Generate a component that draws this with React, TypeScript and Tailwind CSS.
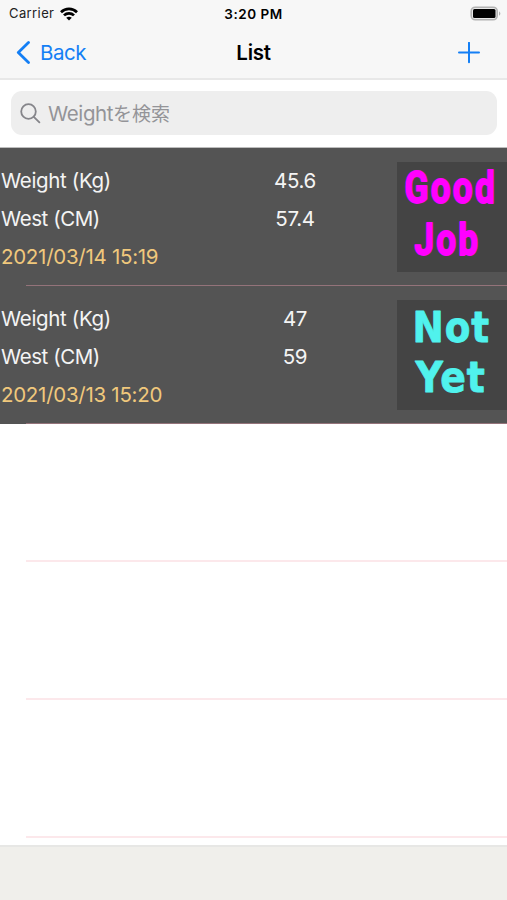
type Line = { text: string; x: number; y: number; scale: number; spacing: number };
type Entry = { weight: string; waist: string; date: string; color: string; font: string; size: number; stroke: number; lines: Line[] };

const entries: Entry[] = [
  {
    weight: '45.6', waist: '57.4', date: '2021/03/14 15:19', color: '#ff00ff', font: 'Roboto, sans-serif', size: 44, stroke: 1.8,
    lines: [
      { text: 'Good', x: 7.5, y: 41, scale: 0.8, spacing: 2.8 },
      { text: 'Job', x: 17.5, y: 93, scale: 0.8, spacing: 2.6 },
    ],
  },
  {
    weight: '47', waist: '59', date: '2021/03/13 15:20', color: '#50f2ed', font: '"DejaVu Sans", sans-serif', size: 43, stroke: 0.8,
    lines: [
      { text: 'Not', x: 15.5, y: 42, scale: 0.87, spacing: 1 },
      { text: 'Yet', x: 18.5, y: 92, scale: 0.88, spacing: 1 },
    ],
  },
];

function Badge({ entry }: { entry: Entry }) {
  return (
    <svg className="mt-[14px] h-[110px] w-[110px] shrink-0 bg-[#444444]" viewBox="0 0 110 110">
      {entry.lines.map((l) => (
        <text key={l.text} transform={`translate(${l.x} ${l.y}) scale(${l.scale} 1)`} letterSpacing={l.spacing} fontFamily={entry.font} fontWeight="700" fontSize={entry.size} fill={entry.color} stroke={entry.color} strokeWidth={entry.stroke} strokeLinejoin="round">
          {l.text}
        </text>
      ))}
    </svg>
  );
}

function Row({ entry }: { entry: Entry }) {
  return (
    <div className="relative flex h-[138px] bg-[#545454] text-[20.5px] leading-[38px] text-[#f4f4f4]">
      <div className="w-[222px] shrink-0 pt-[14px] pl-[1px]">
        <div className="tracking-[-0.35px]">Weight (Kg)</div>
        <div className="tracking-[-0.45px]">West (CM)</div>
        <div className="tracking-[-0.28px] text-[#f0c87c]">{entry.date}</div>
      </div>
      <div className="w-[146px] shrink-0 pt-[14px] text-center tracking-[-0.3px]">
        <div>{entry.weight}</div>
        <div>{entry.waist}</div>
      </div>
      <div className="w-[29px] shrink-0" />
      <Badge entry={entry} />
      <div className="absolute right-0 bottom-0 left-[26px] h-px bg-[#94737a]" />
    </div>
  );
}

export default function App() {
  return (
    <div className="flex h-[900px] w-[507px] flex-col overflow-hidden bg-white font-['Inter','Noto_Sans_CJK_JP',sans-serif]">
      <header className="h-[80px] shrink-0 border-b-2 border-[#e8e8e8] bg-[#f7f7f7]">
        <div className="grid h-[27px] grid-cols-3 items-center text-black">
          <div className="flex items-center gap-[6px] pl-[9px] text-[13px] tracking-[0.4px] text-[#222]">
            <span className="pt-px">Carrier</span>
            <svg className="h-[14px] w-[18px]" viewBox="0 0 18 14" fill="none" stroke="#000" strokeWidth="2.7">
              <path d="M1 5.2C5.5 .8 12.5 .8 17 5.2" />
              <path d="M4 8.4C6.8 5.6 11.2 5.6 14 8.4" />
              <path d="M6.2 10.8Q9 8.6 11.8 10.8L9 13.6Z" fill="#000" stroke="none" />
            </svg>
          </div>
          <div className="pt-px text-center text-[13.5px] font-semibold tracking-[0.5px]">3:20 PM</div>
          <svg className="mr-[5px] h-[15px] w-[32px] justify-self-end" viewBox="0 0 32 15">
            <rect x="1.2" y="1.2" width="26" height="12.6" rx="4" fill="#e8e8e8" stroke="#b2b2b2" strokeWidth="1.6" />
            <rect x="3" y="3" width="22.5" height="9" rx="1.5" fill="#000" />
            <path d="M29 5.2Q31.8 7.5 29 9.8Z" fill="#b2b2b2" />
          </svg>
        </div>
        <div className="grid h-[51px] grid-cols-3 items-center">
          <div className="flex items-center pl-[16px] text-[20.5px] text-[#147ff5]">
            <svg className="mr-[9px] h-[24px] w-[15px]" viewBox="0 0 15 24" fill="none" stroke="currentColor" strokeWidth="2.8" strokeLinecap="round" strokeLinejoin="round">
              <path d="M12.5 1.5L2.3 11.5L12.5 21.5" />
            </svg>
            <span className="pt-px tracking-[-0.5px]">Back</span>
          </div>
          <div className="pt-px text-center text-[20.5px] font-semibold tracking-[-0.3px] text-black">List</div>
          <svg className="mr-[27px] h-[22px] w-[22px] justify-self-end" viewBox="0 0 22 22" stroke="#147ff5" strokeWidth="2" strokeLinecap="round">
            <path d="M11 0.8V20.2M1 10.5H21" />
          </svg>
        </div>
      </header>

      <div className="h-[68px] shrink-0 border-b border-[#bdbdbd] px-[11px] pt-[11px]">
        <div className="flex h-[44px] w-[486px] items-center rounded-[11px] bg-[#eeeeee] pl-[9px] text-[#949498]">
          <svg className="mr-[7px] h-[21px] w-[21px]" viewBox="0 0 21 21" fill="none" stroke="#85858a" strokeWidth="1.8" strokeLinecap="round">
            <circle cx="8.5" cy="8.5" r="7.3" />
            <path d="M13.8 13.8L19.4 19.4" />
          </svg>
          <span className="pt-[2px] text-[20.5px] leading-[28px] tracking-[-0.4px]">Weight<span className="text-[19px] tracking-normal">を検索</span></span>
        </div>
      </div>

      <main className="min-h-0 flex-1 overflow-hidden">
        {entries.map((entry) => (
          <Row key={entry.date} entry={entry} />
        ))}
        <div className="ml-[26px] h-[138px] border-b-2 border-[#fce8eb]" />
        <div className="ml-[26px] h-[138px] border-b-2 border-[#fce8eb]" />
        <div className="ml-[26px] h-[138px] border-b-2 border-[#fce8eb]" />
      </main>

      <footer className="h-[55px] shrink-0 border-t-2 border-[#e7e7e5] bg-[#f0efeb]" />
    </div>
  );
}
